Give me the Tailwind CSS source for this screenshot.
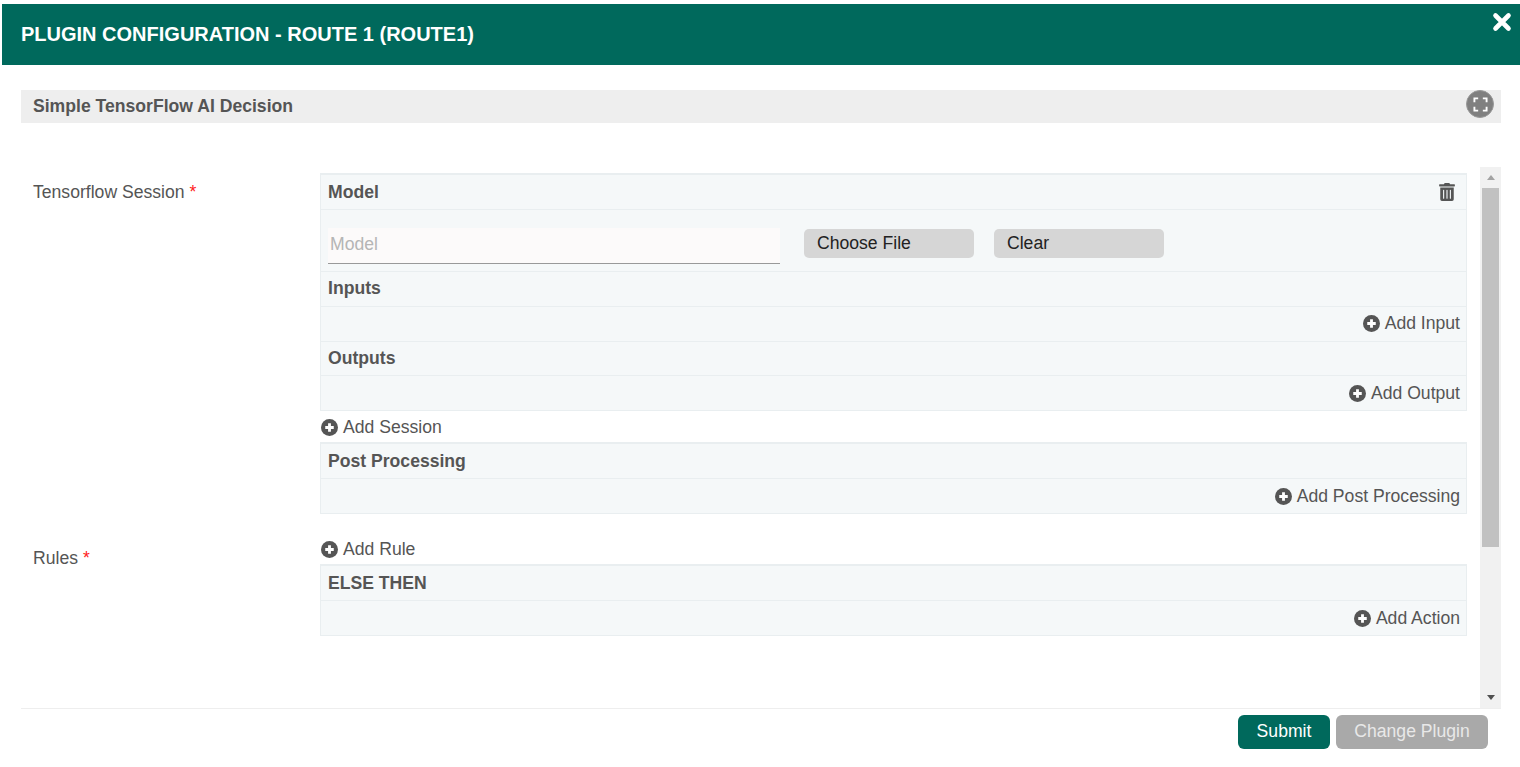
<!DOCTYPE html>
<html lang="en">
<head>
    <meta charset="UTF-8">
    <title>Plugin Configuration</title>
    <script src="https://cdn.jsdelivr.net/npm/@tailwindcss/browser@4"></script>
</head>
<body class="bg-white font-['Liberation_Sans',Arial,sans-serif] text-[#555] text-[17.6px] overflow-hidden">
    <div class="relative h-[767px] w-[1520px] pt-[4px] pl-[2px]">
        <!-- Header -->
        <div class="h-[61px] bg-[#00695c] flex items-center pl-[19px] pb-[2px] text-white font-bold text-[20px]">PLUGIN CONFIGURATION - ROUTE 1 (ROUTE1)</div>
        <svg class="absolute left-[1492px] top-[12px] w-[20px] h-[20px]" viewBox="0 0 20 20"><path d="M3.5 3.5 L16.5 16.5 M16.5 3.5 L3.5 16.5" stroke="#fff" stroke-width="4.6" stroke-linecap="round"/></svg>

        <div class="ml-[19px] w-[1480px]">
            <!-- Plugin title -->
            <div class="mt-[25px] h-[33px] bg-[#eeeeee] flex items-center justify-between pl-[12px] pr-[7px]">
                <span class="font-bold text-[#555]">Simple TensorFlow AI Decision</span>
                <span class="-mt-[5px] w-[28px] h-[28px] rounded-full bg-[#808080] border border-[#999] flex items-center justify-center">
                    <svg class="w-[15px] h-[15px]" viewBox="0 0 16 16" fill="none" stroke="#fff" stroke-width="2"><path d="M1.5 5.500V1.500H5.500M10.500 1.500H14.500V5.500M14.500 10.500V14.500H10.500M5.500 14.500H1.500V10.500"/></svg>
                </span>
            </div>

            <!-- Scrolling form -->
            <div class="mt-[44px] h-[542px] flex border-b border-[#eeeeee]">
                <div class="w-[1459px] flex pt-[6px]">
                    <div class="w-[299px] pl-[12px] flex flex-col">
                        <div class="h-[23px] pt-[1px] mt-[5px]">Tensorflow Session <span class="text-[#f22]">*</span></div>
                        <div class="mt-[343px] pt-[1px]">Rules <span class="text-[#f22]">*</span></div>
                    </div>
                    <div class="w-[1147px]">
                        <!-- Session -->
                        <div class="bg-[#f5f8f9] border border-[#e9eef0] border-t-2">
                            <div class="h-[35px] border-b border-[#e9eef0] flex items-center justify-between pl-[7px] pr-[11px]">
                                <span class="font-bold">Model</span>
                                <svg class="w-[16px] h-[18px]" viewBox="0 0 448 512" fill="#555"><path d="M32 464a48 48 0 0 0 48 48h288a48 48 0 0 0 48-48V128H32zm272-256a16 16 0 0 1 32 0v224a16 16 0 0 1-32 0zm-96 0a16 16 0 0 1 32 0v224a16 16 0 0 1-32 0zm-96 0a16 16 0 0 1 32 0v224a16 16 0 0 1-32 0zM432 32H312l-9.400-18.700A24 24 0 0 0 281.100 0H166.800a23.700 23.700 0 0 0-21.400 13.300L136 32H16A16 16 0 0 0 0 48v32a16 16 0 0 0 16 16h416a16 16 0 0 0 16-16V48a16 16 0 0 0-16-16z"/></svg>
                            </div>
                            <div class="h-[62px] border-b border-[#e9eef0] flex pl-[7px] pt-[19px]">
                                <div class="w-[452px] h-[36px] -mt-[1px] bg-[#fcfafa] border-b border-[#999] pl-[2px] pt-[4px] text-[#b5b5b5] leading-[24px]">Model</div>
                                <div class="ml-[24px] w-[170px] h-[29px] bg-[#d6d6d6] rounded-[5px] pl-[13px] text-[#222] leading-[28px]">Choose File</div>
                                <div class="ml-[20px] w-[170px] h-[29px] bg-[#d6d6d6] rounded-[5px] pl-[13px] text-[#222] leading-[28px]">Clear</div>
                            </div>
                            <div class="h-[35px] pb-[2px] border-b border-[#e9eef0] flex items-center pl-[7px] font-bold">Inputs</div>
                            <div class="h-[34px] pb-[2px] flex items-center justify-end pr-[6px] gap-[5px]">
                                <svg class="w-[17px] h-[17px]" viewBox="0 0 18 18"><circle cx="9" cy="9" r="9" fill="#555"/><path d="M9 4.500V13.500M4.500 9H13.500" stroke="#fff" stroke-width="3"/></svg>
                                <span>Add Input</span>
                            </div>
                            <div class="h-[35px] border-y border-[#e9eef0] flex items-center pl-[7px] font-bold">Outputs</div>
                            <div class="h-[34px] flex items-center justify-end pr-[6px] gap-[5px]">
                                <svg class="w-[17px] h-[17px]" viewBox="0 0 18 18"><circle cx="9" cy="9" r="9" fill="#555"/><path d="M9 4.500V13.500M4.500 9H13.500" stroke="#fff" stroke-width="3"/></svg>
                                <span>Add Output</span>
                            </div>
                        </div>
                        <div class="h-[31px] pt-[1px] flex items-center gap-[5px] pl-[1px]">
                            <svg class="w-[17px] h-[17px]" viewBox="0 0 18 18"><circle cx="9" cy="9" r="9" fill="#555"/><path d="M9 4.500V13.500M4.500 9H13.500" stroke="#fff" stroke-width="3"/></svg>
                            <span>Add Session</span>
                        </div>
                        <!-- Post processing -->
                        <div class="bg-[#f5f8f9] border border-[#e9eef0] border-t-2">
                            <div class="h-[35px] border-b border-[#e9eef0] flex items-center pl-[7px] font-bold">Post Processing</div>
                            <div class="h-[34px] flex items-center justify-end pr-[6px] gap-[5px]">
                                <svg class="w-[17px] h-[17px]" viewBox="0 0 18 18"><circle cx="9" cy="9" r="9" fill="#555"/><path d="M9 4.500V13.500M4.500 9H13.500" stroke="#fff" stroke-width="3"/></svg>
                                <span>Add Post Processing</span>
                            </div>
                        </div>
                        <div class="mt-[20px] h-[30px] flex items-center gap-[5px] pl-[1px]">
                            <svg class="w-[17px] h-[17px]" viewBox="0 0 18 18"><circle cx="9" cy="9" r="9" fill="#555"/><path d="M9 4.500V13.500M4.500 9H13.500" stroke="#fff" stroke-width="3"/></svg>
                            <span>Add Rule</span>
                        </div>
                        <!-- Else -->
                        <div class="bg-[#f5f8f9] border border-[#e9eef0] border-t-2">
                            <div class="h-[35px] border-b border-[#e9eef0] flex items-center pl-[7px] font-bold">ELSE THEN</div>
                            <div class="h-[34px] flex items-center justify-end pr-[6px] gap-[5px]">
                                <svg class="w-[17px] h-[17px]" viewBox="0 0 18 18"><circle cx="9" cy="9" r="9" fill="#555"/><path d="M9 4.500V13.500M4.500 9H13.500" stroke="#fff" stroke-width="3"/></svg>
                                <span>Add Action</span>
                            </div>
                        </div>
                    </div>
                </div>
                <!-- Scrollbar -->
                <div class="w-[21px] bg-[#f1f1f1] flex flex-col items-center">
                    <div class="h-[21px] flex items-center justify-center"><div class="w-0 h-0 border-x-[4px] border-x-transparent border-b-[5px] border-b-[#a3a3a3]"></div></div>
                    <div class="w-[17px] h-[359px] bg-[#c1c1c1]"></div>
                    <div class="flex-1"></div>
                    <div class="h-[21px] flex items-center justify-center"><div class="w-0 h-0 border-x-[4px] border-x-transparent border-t-[5px] border-t-[#505050]"></div></div>
                </div>
            </div>

            <!-- Footer -->
            <div class="mt-[6px] flex justify-end gap-[6px] pr-[13px]">
                <div class="w-[92px] h-[34px] rounded-[6px] bg-[#00695c] text-white flex items-center justify-center pb-[1px]">Submit</div>
                <div class="w-[152px] h-[34px] rounded-[6px] bg-[#a9a9a9] text-[#e8e8e8] flex items-center justify-center pb-[1px]">Change Plugin</div>
            </div>
        </div>
    </div>
</body>
</html>
